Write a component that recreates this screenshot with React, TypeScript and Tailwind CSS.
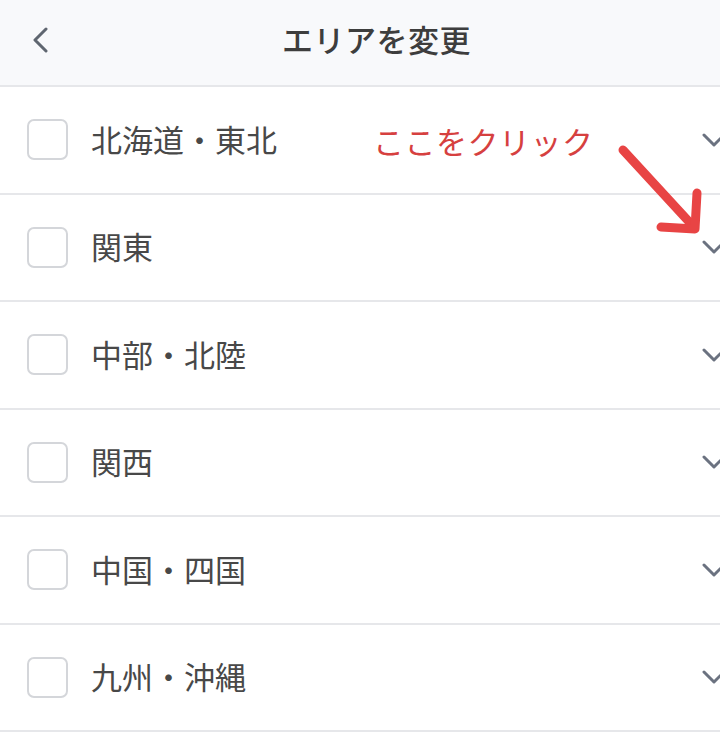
const areas = ['北海道・東北', '関東', '中部・北陸', '関西', '中国・四国', '九州・沖縄']

function Chevron() {
  return (
    <svg width="24" height="14" viewBox="0 0 24 14" className="shrink-0 -mr-[6px]">
      <path d="M2 2 L12 12 L22 2" fill="none" stroke="#6b7280" strokeWidth="3" strokeLinecap="round" strokeLinejoin="round" />
    </svg>
  )
}

export default function App() {
  return (
    <div
      className="relative w-[720px] h-[740px] overflow-hidden bg-white text-[#444]"
      style={{ fontFamily: '"Noto Sans CJK JP", "Noto Sans", sans-serif' }}
    >
      {/* header */}
      <div className="relative h-[87px] bg-[#f8f9fb] border-b-2 border-[#e6e7ea] flex items-center justify-center">
        <button className="absolute left-[32px] top-[27px]">
          <svg width="18" height="26" viewBox="0 0 18 26">
            <path d="M14 2 L3 13 L14 24" fill="none" stroke="#5f6670" strokeWidth="3" strokeLinecap="round" strokeLinejoin="round" />
          </svg>
        </button>
        <h1 className="ml-[33px] text-[31px] font-medium text-[#3d3d3d] tracking-[0.5px] -mt-[6px]">エリアを変更</h1>
      </div>

      {/* area list */}
      <ul>
        {areas.map((area) => (
          <li key={area} className="h-[107.5px] border-b-2 border-[#e6e7ea] flex items-center pl-[27px]">
            <span className="w-[41px] h-[41px] rounded-[7px] border-2 border-[#d4d6da] bg-white shrink-0" />
            <span className="ml-[23px] -mt-[3px] text-[31px] leading-none text-[#484848]">{area}</span>
            <span className="ml-auto">
              <Chevron />
            </span>
          </li>
        ))}
      </ul>

      {/* annotation overlay */}
      <div className="absolute left-[373px] top-[125px] text-[31px] leading-none text-[#d6403f] tracking-[0.5px]">
        ここをクリック
      </div>
      <svg className="absolute left-0 top-0 pointer-events-none" width="720" height="740">
        <path d="M623 150 L692 225" fill="none" stroke="#e84444" strokeWidth="9" strokeLinecap="round" />
        <path d="M661 227 L695 229 L697 193" fill="none" stroke="#e84444" strokeWidth="9" strokeLinecap="round" strokeLinejoin="round" />
      </svg>
    </div>
  )
}
